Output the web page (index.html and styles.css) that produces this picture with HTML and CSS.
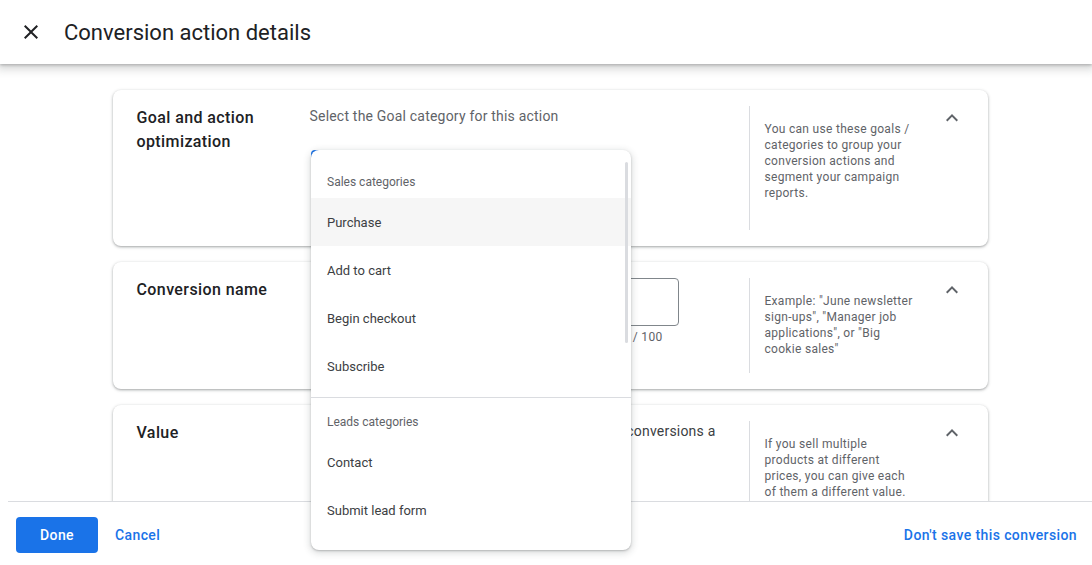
FILE: index.html
```html
<!DOCTYPE html>
<html lang="en">

<head>
    <meta charset="UTF-8">
    <meta name="viewport" content="width=device-width, initial-scale=1.0">
    <title>Conversion action details</title>
    <link rel="stylesheet" href="styles.css">
</head>

<body>
    <div class="page">
        <header class="topbar">
            <button class="icon-btn close-btn" aria-label="Close">
                <svg viewBox="0 0 24 24" width="24" height="24">
                    <path d="M19 6.41L17.59 5 12 10.59 6.41 5 5 6.41 10.59 12 5 17.59 6.41 19 12 13.41 17.59 19 19 17.59 13.41 12z" />
                </svg>
            </button>
            <h1 class="topbar-title">Conversion action details</h1>
        </header>

        <main class="content">
            <div class="cards">
                <section class="card">
                    <h2 class="card-title">Goal and action optimization</h2>
                    <div class="card-body">
                        <p class="field-label">Select the Goal category for this action</p>
                        <div class="select-box focused"></div>
                    </div>
                    <div class="card-help">You can use these goals / categories to group your conversion actions and segment your campaign reports.</div>
                    <button class="icon-btn expand-btn" aria-label="Collapse">
                        <svg viewBox="0 0 24 24" width="24" height="24">
                            <path d="M12 8l-6 6 1.41 1.41L12 10.83l4.59 4.58L18 14z" />
                        </svg>
                    </button>
                </section>

                <section class="card">
                    <h2 class="card-title">Conversion name</h2>
                    <div class="card-body">
                        <div class="text-input"></div>
                        <div class="counter">0 / 100</div>
                    </div>
                    <div class="card-help">Example: "June newsletter sign-ups", "Manager job applications", or "Big cookie sales"</div>
                    <button class="icon-btn expand-btn" aria-label="Collapse">
                        <svg viewBox="0 0 24 24" width="24" height="24">
                            <path d="M12 8l-6 6 1.41 1.41L12 10.83l4.59 4.58L18 14z" />
                        </svg>
                    </button>
                </section>

                <section class="card">
                    <h2 class="card-title">Value</h2>
                    <div class="card-body">
                        <p class="field-text">Measure the impact of advertising by giving your conversions a value.</p>
                    </div>
                    <div class="card-help">If you sell multiple products at different prices, you can give each of them a different value.</div>
                    <button class="icon-btn expand-btn" aria-label="Collapse">
                        <svg viewBox="0 0 24 24" width="24" height="24">
                            <path d="M12 8l-6 6 1.41 1.41L12 10.83l4.59 4.58L18 14z" />
                        </svg>
                    </button>
                </section>
            </div>
        </main>

        <footer class="footer">
            <button class="btn-primary">Done</button>
            <button class="btn-text">Cancel</button>
            <button class="btn-text btn-right">Don't save this conversion</button>
        </footer>
    </div>

    <!-- open goal category menu -->
    <div class="menu">
        <div class="menu-group">Sales categories</div>
        <div class="menu-item active">Purchase</div>
        <div class="menu-item">Add to cart</div>
        <div class="menu-item">Begin checkout</div>
        <div class="menu-item">Subscribe</div>
        <div class="menu-divider"></div>
        <div class="menu-group">Leads categories</div>
        <div class="menu-item">Contact</div>
        <div class="menu-item">Submit lead form</div>
        <div class="menu-scroll"></div>
    </div>
</body>

</html>
```

FILE: styles.css
```css
* {
    box-sizing: border-box;
}

body {
    margin: 0;
    font-family: Roboto, Arial, sans-serif;
    color: #202124;
    background: #fff;
    overflow: hidden;
}

.page {
    height: 100vh;
    display: flex;
    flex-direction: column;
}

button {
    font-family: inherit;
    border: none;
    background: none;
    cursor: pointer;
    padding: 0;
}

.icon-btn svg {
    display: block;
    fill: #5f6368;
}

/* top bar */
.topbar {
    height: 64px;
    flex: none;
    display: flex;
    align-items: center;
    padding-left: 19px;
    background: #fff;
    position: relative;
    z-index: 2;
    box-shadow: 0 1px 3px rgba(60, 64, 67, .35), 0 3px 8px 3px rgba(60, 64, 67, .18);
}

.close-btn svg {
    fill: #202124;
}

.topbar-title {
    margin: 0 0 0 21px;
    font-size: 22px;
    font-weight: 400;
    color: #202124;
}

/* cards */
.content {
    flex: 1;
    overflow: hidden;
    padding: 26px 0 0 8px;
}

.cards {
    width: 875px;
    margin: 0 auto;
    display: flex;
    flex-direction: column;
    gap: 16px;
}

.card {
    display: grid;
    grid-template-columns: 173px 439px 191px 24px;
    align-items: start;
    padding: 16px 24px;
    background: #fff;
    border-radius: 8px;
    box-shadow: 0 1px 2px rgba(60, 64, 67, .3), 0 1px 3px 1px rgba(60, 64, 67, .15);
}

.card-title {
    margin: 0;
    width: 150px;
    font-size: 16px;
    line-height: 24px;
    font-weight: 500;
    letter-spacing: .4px;
    color: #202124;
}

.card-body {
    padding-right: 24px;
}

.field-label,
.field-text {
    margin: 0;
    font-size: 14px;
    line-height: 20px;
    letter-spacing: .2px;
    color: #5f6368;
}

.field-text {
    margin-left: 2px;
    color: #3c4043;
}

.select-box {
    width: 300px;
    height: 56px;
    margin: 24px 0 24px 1px;
    border: 1px solid #80868b;
    border-radius: 4px;
}

.select-box.focused {
    border: 2px solid #1a73e8;
}

.text-input {
    width: 368px;
    height: 48px;
    margin-left: 1px;
    border: 1px solid #80868b;
    border-radius: 4px;
}

.counter {
    width: 369px;
    padding: 3px 16px 0;
    text-align: right;
    font-size: 12px;
    line-height: 16px;
    letter-spacing: .3px;
    color: #5f6368;
}

.card-help {
    align-self: stretch;
    border-left: 1px solid #dadce0;
    padding: 15px 25px 16px 15px;
    font-size: 12px;
    line-height: 16px;
    letter-spacing: .3px;
    color: #5f6368;
}

/* footer */
.footer {
    height: 64px;
    flex: none;
    display: flex;
    align-items: flex-start;
    margin-left: 8px;
    padding: 15px 7px 0 8px;
    background: #fff;
    border-top: 1px solid #dadce0;
    position: relative;
    z-index: 1;
}

.btn-primary {
    height: 36px;
    padding: 0 24px;
    border-radius: 4px;
    background: #1a73e8;
    color: #fff;
    font-size: 14px;
    font-weight: 500;
    letter-spacing: .4px;
}

.btn-text {
    height: 36px;
    margin-left: 9px;
    padding: 0 8px;
    color: #1a73e8;
    font-size: 14px;
    font-weight: 500;
    letter-spacing: .4px;
}

.btn-right {
    margin-left: auto;
}

/* dropdown menu */
.menu {
    position: absolute;
    left: 311px;
    top: 150px;
    width: 320px;
    height: 400px;
    padding-top: 8px;
    background: #fff;
    border-radius: 8px;
    z-index: 5;
    overflow: hidden;
    box-shadow: 0 1px 2px rgba(60, 64, 67, .3), 0 2px 6px 2px rgba(60, 64, 67, .15);
}

.menu-group {
    height: 40px;
    padding: 16px 16px 0;
    font-size: 12px;
    line-height: 16px;
    color: #5f6368;
}

.menu-item {
    height: 48px;
    display: flex;
    align-items: center;
    padding: 0 16px;
    font-size: 13px;
    color: #3c4043;
}

.menu-item.active {
    background: #f6f6f6;
}

.menu-divider {
    height: 1px;
    margin-top: 7px;
    background: #dadce0;
}

.menu-scroll {
    position: absolute;
    top: 12px;
    right: 3px;
    width: 3px;
    height: 181px;
    background: #dadce0;
    border-radius: 2px;
}
```
